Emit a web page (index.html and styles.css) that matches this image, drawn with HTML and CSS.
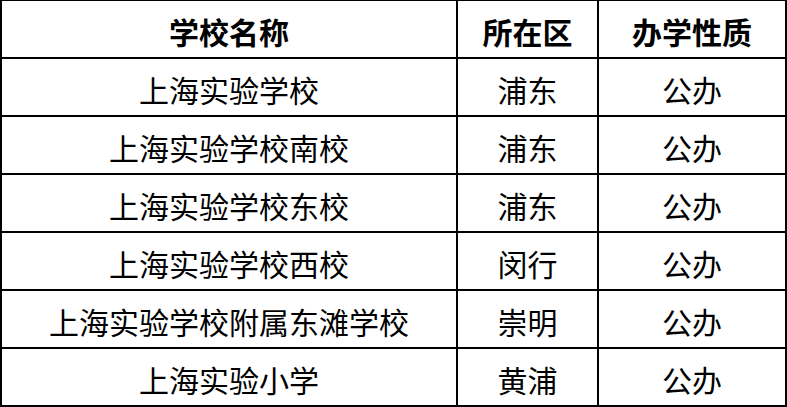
FILE: index.html
```html
<!DOCTYPE html>
<html lang="zh-CN">
<head>
<meta charset="utf-8">
<title>学校列表</title>
<link rel="stylesheet" href="styles.css">
</head>
<body>
<table class="schools">
  <colgroup>
    <col class="c-name">
    <col class="c-district">
    <col class="c-type">
  </colgroup>
  <thead>
    <tr><th>学校名称</th><th>所在区</th><th>办学性质</th></tr>
  </thead>
  <tbody>
    <tr><td>上海实验学校</td><td>浦东</td><td>公办</td></tr>
    <tr><td>上海实验学校南校</td><td>浦东</td><td>公办</td></tr>
    <tr><td>上海实验学校东校</td><td>浦东</td><td>公办</td></tr>
    <tr><td>上海实验学校西校</td><td>闵行</td><td>公办</td></tr>
    <tr><td>上海实验学校附属东滩学校</td><td>崇明</td><td>公办</td></tr>
    <tr><td>上海实验小学</td><td>黄浦</td><td>公办</td></tr>
  </tbody>
</table>
</body>
</html>
```

FILE: styles.css
```css
html, body {
  margin: 0;
  padding: 0;
  background: #fff;
}
.schools {
  border-collapse: separate;
  border-spacing: 0;
  table-layout: fixed;
  width: 787px;
  font-family: "Noto Sans CJK SC", "Microsoft YaHei", sans-serif;
  font-size: 30px;
  color: #000;
  border-top: 1px solid #000;
  border-left: 2px solid #000;
}
.c-name { width: 456px; }
.c-district { width: 141px; }
.c-type { width: 188px; }
.schools th,
.schools td {
  height: 58px;
  padding: 4px 0 0;
  box-sizing: border-box;
  text-align: center;
  vertical-align: middle;
  line-height: 30px;
  border-right: 2px solid #000;
  border-bottom: 2px solid #000;
  white-space: nowrap;
}
.schools th {
  font-weight: 700;
}
.schools td {
  font-weight: 400;
}
```
